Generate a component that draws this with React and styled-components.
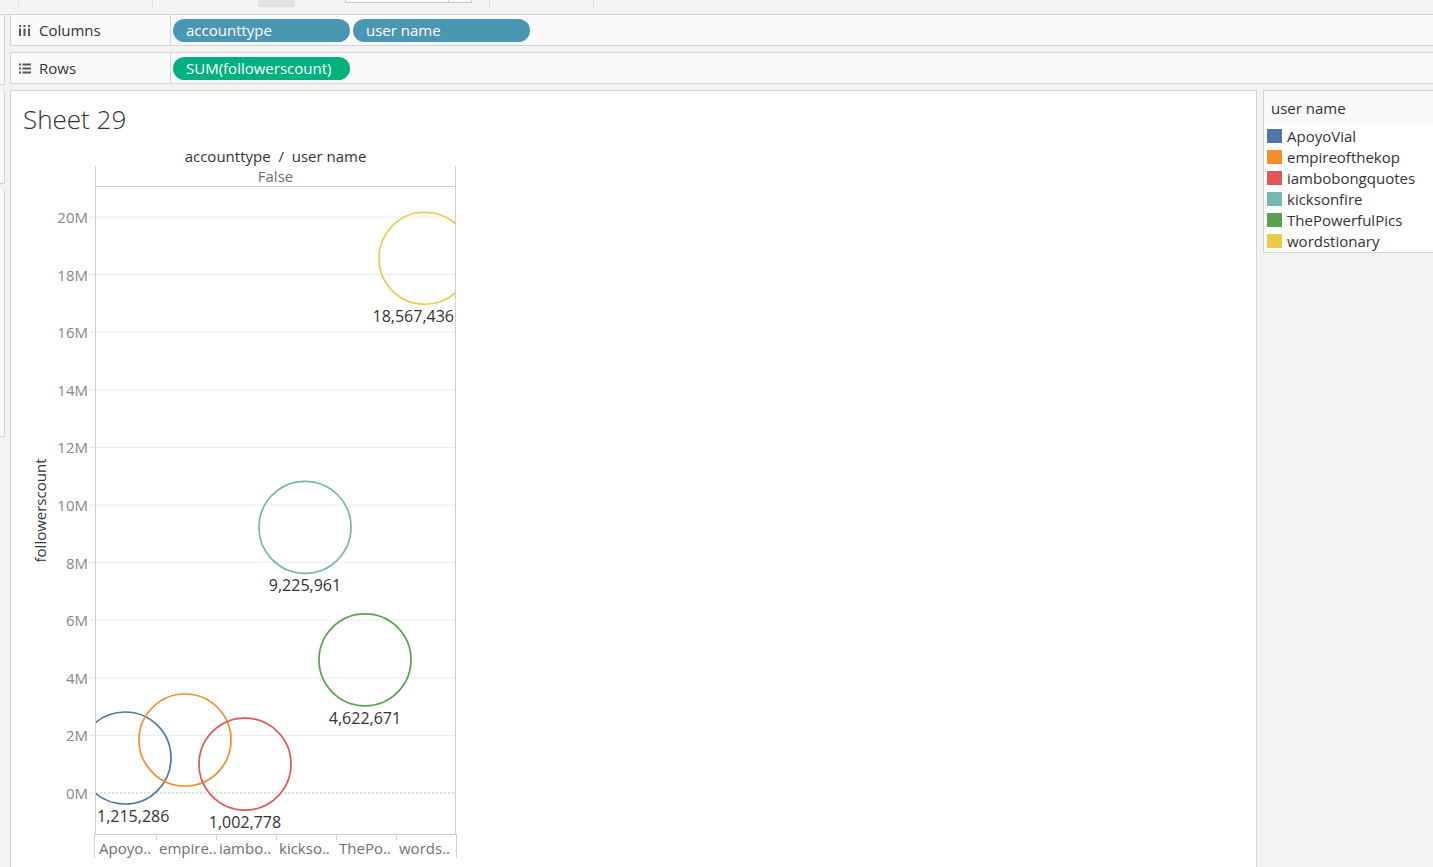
import React from "react";
import styled, { createGlobalStyle } from "styled-components";

const GlobalStyle = createGlobalStyle`
  body {
    margin: 0;
    overflow: hidden;
    background: #f3f3f3;
  }
`;

const users = [
  { name: "ApoyoVial", short: "Apoyo..", color: "#4e79a7", value: 1215286, label: "1,215,286", anchor: "start" },
  { name: "empireofthekop", short: "empire..", color: "#f28e2b", value: 1840000, label: null },
  { name: "iambobongquotes", short: "iambo..", color: "#e15759", value: 1002778, label: "1,002,778" },
  { name: "kicksonfire", short: "kickso..", color: "#76b7b2", value: 9225961, label: "9,225,961" },
  { name: "ThePowerfulPics", short: "ThePo..", color: "#59a14f", value: 4622671, label: "4,622,671" },
  { name: "wordstionary", short: "words..", color: "#edc948", value: 18567436, label: "18,567,436", anchor: "end" },
];

const PLOT_W = 359;
const PLOT_H = 647;
const ZERO_Y = 606;
const PX_PER_M = 28.8;
const R = 46;
const yOf = (v) => ZERO_Y - (v / 1000000) * PX_PER_M;
const ticks = [0, 2, 4, 6, 8, 10, 12, 14, 16, 18, 20];

export default function App() {
  return (
    <Page>
      <GlobalStyle />
      <TopStrip>
        <Tab $w={18} $line />
        <Tab $w={133} $line />
        <Tab $w={105} />
        <Tab $w={37} $fill />
        <Tab $w={50} />
        <TabBox>
          <TabBoxPart $w={102} />
          <TabBoxPart $w={22} />
        </TabBox>
        <Tab $w={17} $line />
        <Tab $w={103} $line />
      </TopStrip>
      <Body>
        <LeftRail>
          <RailBox $h={69} />
          <RailBox $h={92} />
          <RailBox $h={246} />
        </LeftRail>
        <Main>
          <Shelf>
            <ShelfLabel>
              <ColumnsIcon />
              Columns
            </ShelfLabel>
            <Pills>
              <Pill $color="#4a97b3">accounttype</Pill>
              <Pill $color="#4a97b3">user name</Pill>
            </Pills>
          </Shelf>
          <Shelf $top>
            <ShelfLabel>
              <RowsIcon />
              Rows
            </ShelfLabel>
            <Pills>
              <Pill $color="#00b180">SUM(followerscount)</Pill>
            </Pills>
          </Shelf>
          <Content>
            <Sheet>
              <Title>Sheet 29</Title>
              <ChartGrid>
                <span />
                <FieldHeader>accounttype&nbsp;&nbsp;/&nbsp;&nbsp;user name</FieldHeader>
                <span />
                <ValueHeader>False</ValueHeader>
                <YAxis />
                <Plot />
                <span />
                <XLabels>
                  {users.map((u, i) => (
                    <XLabel key={u.name} $tick={i > 0}>
                      {u.short}
                    </XLabel>
                  ))}
                </XLabels>
              </ChartGrid>
            </Sheet>
            <Legend>
              <LegendHeader>user name</LegendHeader>
              <LegendList>
                {users.map((u) => (
                  <LegendItem key={u.name}>
                    <Swatch $color={u.color} />
                    {u.name}
                  </LegendItem>
                ))}
              </LegendList>
            </Legend>
          </Content>
        </Main>
      </Body>
    </Page>
  );
}

function ColumnsIcon() {
  return (
    <IconSvg width="12" height="11" viewBox="0 0 12 11">
      {[0, 4.5, 9].map((x) => (
        <g key={x} fill="#555">
          <rect x={x} y="0" width="2" height="2" />
          <rect x={x} y="3.5" width="2" height="7.5" />
        </g>
      ))}
    </IconSvg>
  );
}

function RowsIcon() {
  return (
    <IconSvg width="12" height="11" viewBox="0 0 12 11">
      {[0.5, 4.5, 8.5].map((y) => (
        <g key={y} fill="#555">
          <rect x="0" y={y} width="2" height="2" />
          <rect x="3.5" y={y} width="8.5" height="2" />
        </g>
      ))}
    </IconSvg>
  );
}

function YAxis() {
  return (
    <svg width="84" height={PLOT_H} style={{ display: "block" }}>
      {ticks.map((t) => (
        <g key={t}>
          <line x1="78" x2="84" y1={yOf(t * 1000000)} y2={yOf(t * 1000000)} stroke="#e4e4e4" />
          <text
            x="77"
            y={yOf(t * 1000000)}
            textAnchor="end"
            dominantBaseline="central"
            fill="#888"
            fontSize="15"
            fontFamily="'Open Sans', sans-serif"
          >
            {t}M
          </text>
        </g>
      ))}
      <text
        x="29"
        y="323.5"
        transform="rotate(-90 29 323.5)"
        textAnchor="middle"
        dominantBaseline="central"
        fill="#333"
        fontSize="15"
        fontFamily="'Open Sans', sans-serif"
      >
        followerscount
      </text>
    </svg>
  );
}

function Plot() {
  return (
    <PlotCell>
      <svg width={PLOT_W} height={PLOT_H} style={{ display: "block" }}>
        {ticks.slice(1).map((t) => (
          <line key={t} x1="0" x2={PLOT_W} y1={yOf(t * 1000000)} y2={yOf(t * 1000000)} stroke="#ececec" />
        ))}
        <line x1="0" x2={PLOT_W} y1={ZERO_Y} y2={ZERO_Y} stroke="#bdbdbd" strokeDasharray="2 2" />
        {users.map((u, i) => {
          const cx = 60 * i + 29;
          const cy = yOf(u.value);
          let lx = cx;
          if (u.anchor === "start") lx = 1;
          if (u.anchor === "end") lx = PLOT_W - 1;
          return (
            <g key={u.name}>
              <circle cx={cx} cy={cy} r={R} fill="none" stroke={u.color} strokeWidth="1.7" />
              {u.label && (
                <text
                  x={lx}
                  y={cy + 58}
                  textAnchor={u.anchor || "middle"}
                  dominantBaseline="central"
                  fill="#333"
                  fontSize="16"
                  fontFamily="'Open Sans', sans-serif"
                >
                  {u.label}
                </text>
              )}
            </g>
          );
        })}
      </svg>
    </PlotCell>
  );
}

const Page = styled.div`
  height: 867px;
  overflow: hidden;
  background: #f3f3f3;
  font-family: "Open Sans", "Noto Sans", sans-serif;
  font-size: 15px;
  color: #333;
`;

const TopStrip = styled.div`
  height: 14px;
  display: flex;
  align-items: flex-start;
  border-bottom: 1px solid #d4d4d4;
`;

const Tab = styled.div`
  width: ${(p) => p.$w}px;
  height: 7px;
  flex: none;
  background: ${(p) => (p.$fill ? "#e3e3e3" : "transparent")};
  border-right: ${(p) => (p.$line ? "1px solid #dcdcdc" : "none")};
`;

const TabBox = styled.div`
  display: flex;
  flex: none;
  height: 2px;
  border: 1px solid #c9c9c9;
  border-top: none;
  background: #fafafa;
`;

const TabBoxPart = styled.div`
  width: ${(p) => p.$w}px;
  & + & {
    border-left: 1px solid #c9c9c9;
  }
`;

const Body = styled.div`
  display: flex;
  flex: 1;
`;

const LeftRail = styled.div`
  width: 10px;
  flex: none;
  display: flex;
  flex-direction: column;
  gap: 6px;
`;

const RailBox = styled.div`
  width: 4px;
  height: ${(p) => p.$h}px;
  background: #fafafa;
  border-right: 1px solid #d4d4d4;
  border-bottom: 1px solid #d4d4d4;
`;

const Main = styled.div`
  flex: 1;
  display: flex;
  flex-direction: column;
  overflow: hidden;
`;

const Shelf = styled.div`
  display: flex;
  align-items: stretch;
  height: 30px;
  background: #fafafa;
  border-left: 1px solid #d4d4d4;
  border-bottom: 1px solid #d4d4d4;
  border-top: ${(p) => (p.$top ? "1px solid #d4d4d4" : "none")};
  margin-top: ${(p) => (p.$top ? "6px" : "0")};
`;

const ShelfLabel = styled.div`
  width: 160px;
  flex: none;
  display: flex;
  align-items: center;
  gap: 8px;
  padding-left: 8px;
  box-sizing: border-box;
  border-right: 1px solid #d4d4d4;
  color: #333;
`;

const IconSvg = styled.svg`
  display: block;
  flex: none;
`;

const Pills = styled.div`
  display: flex;
  align-items: center;
  gap: 3px;
  padding-left: 2px;
  padding-top: 1px;
`;

const Pill = styled.div`
  width: 177px;
  height: 23px;
  box-sizing: border-box;
  border-radius: 12px;
  background: ${(p) => p.$color};
  color: #fff;
  padding-left: 13px;
  line-height: 23px;
  white-space: nowrap;
`;

const Content = styled.div`
  flex: 1;
  display: flex;
  gap: 6px;
  margin-top: 6px;
  align-items: flex-start;
`;

const Sheet = styled.div`
  width: 1245px;
  flex: none;
  height: 800px;
  background: #fff;
  border: 1px solid #d4d4d4;
  display: flex;
  flex-direction: column;
`;

const Title = styled.div`
  font-size: 26px;
  font-weight: 300;
  line-height: 36px;
  padding: 10px 0 0 12px;
  color: #333;
`;

const ChartGrid = styled.div`
  display: grid;
  grid-template-columns: 84px 361px;
  grid-template-rows: 20px 21px ${PLOT_H}px 24px;
  margin-top: 9px;
`;

const FieldHeader = styled.div`
  text-align: center;
  line-height: 20px;
  color: #333;
  white-space: nowrap;
`;

const ValueHeader = styled.div`
  border: 1px solid #cfcfcf;
  border-top: none;
  text-align: center;
  line-height: 20px;
  color: #77697a;
`;

const PlotCell = styled.div`
  border-left: 1px solid #cfcfcf;
  border-right: 1px solid #cfcfcf;
  overflow: hidden;
`;

const XLabels = styled.div`
  display: grid;
  grid-template-columns: repeat(6, 60px);
  border: 1px solid #cfcfcf;
  border-bottom: none;
  margin-left: -1px;
  margin-right: -1px;
  padding-left: 1px;
`;

const XLabel = styled.div`
  padding: 3px 0 0 3px;
  line-height: 20px;
  color: #707070;
  white-space: nowrap;
  overflow: hidden;
  background: ${(p) =>
    p.$tick ? "linear-gradient(#d4d4d4, #d4d4d4) left top / 1px 5px no-repeat" : "none"};
`;

const Legend = styled.div`
  width: 180px;
  flex: none;
  background: #fff;
  border: 1px solid #d4d4d4;
`;

const LegendHeader = styled.div`
  height: 34px;
  line-height: 34px;
  padding-left: 7px;
  background: #fafafa;
  color: #333;
`;

const LegendList = styled.div`
  display: flex;
  flex-direction: column;
  padding-bottom: 1px;
`;

const LegendItem = styled.div`
  display: flex;
  align-items: center;
  gap: 5px;
  height: 21px;
  padding-left: 3px;
  color: #333;
  white-space: nowrap;
`;

const Swatch = styled.span`
  width: 15px;
  height: 14px;
  flex: none;
  background: ${(p) => p.$color};
`;
